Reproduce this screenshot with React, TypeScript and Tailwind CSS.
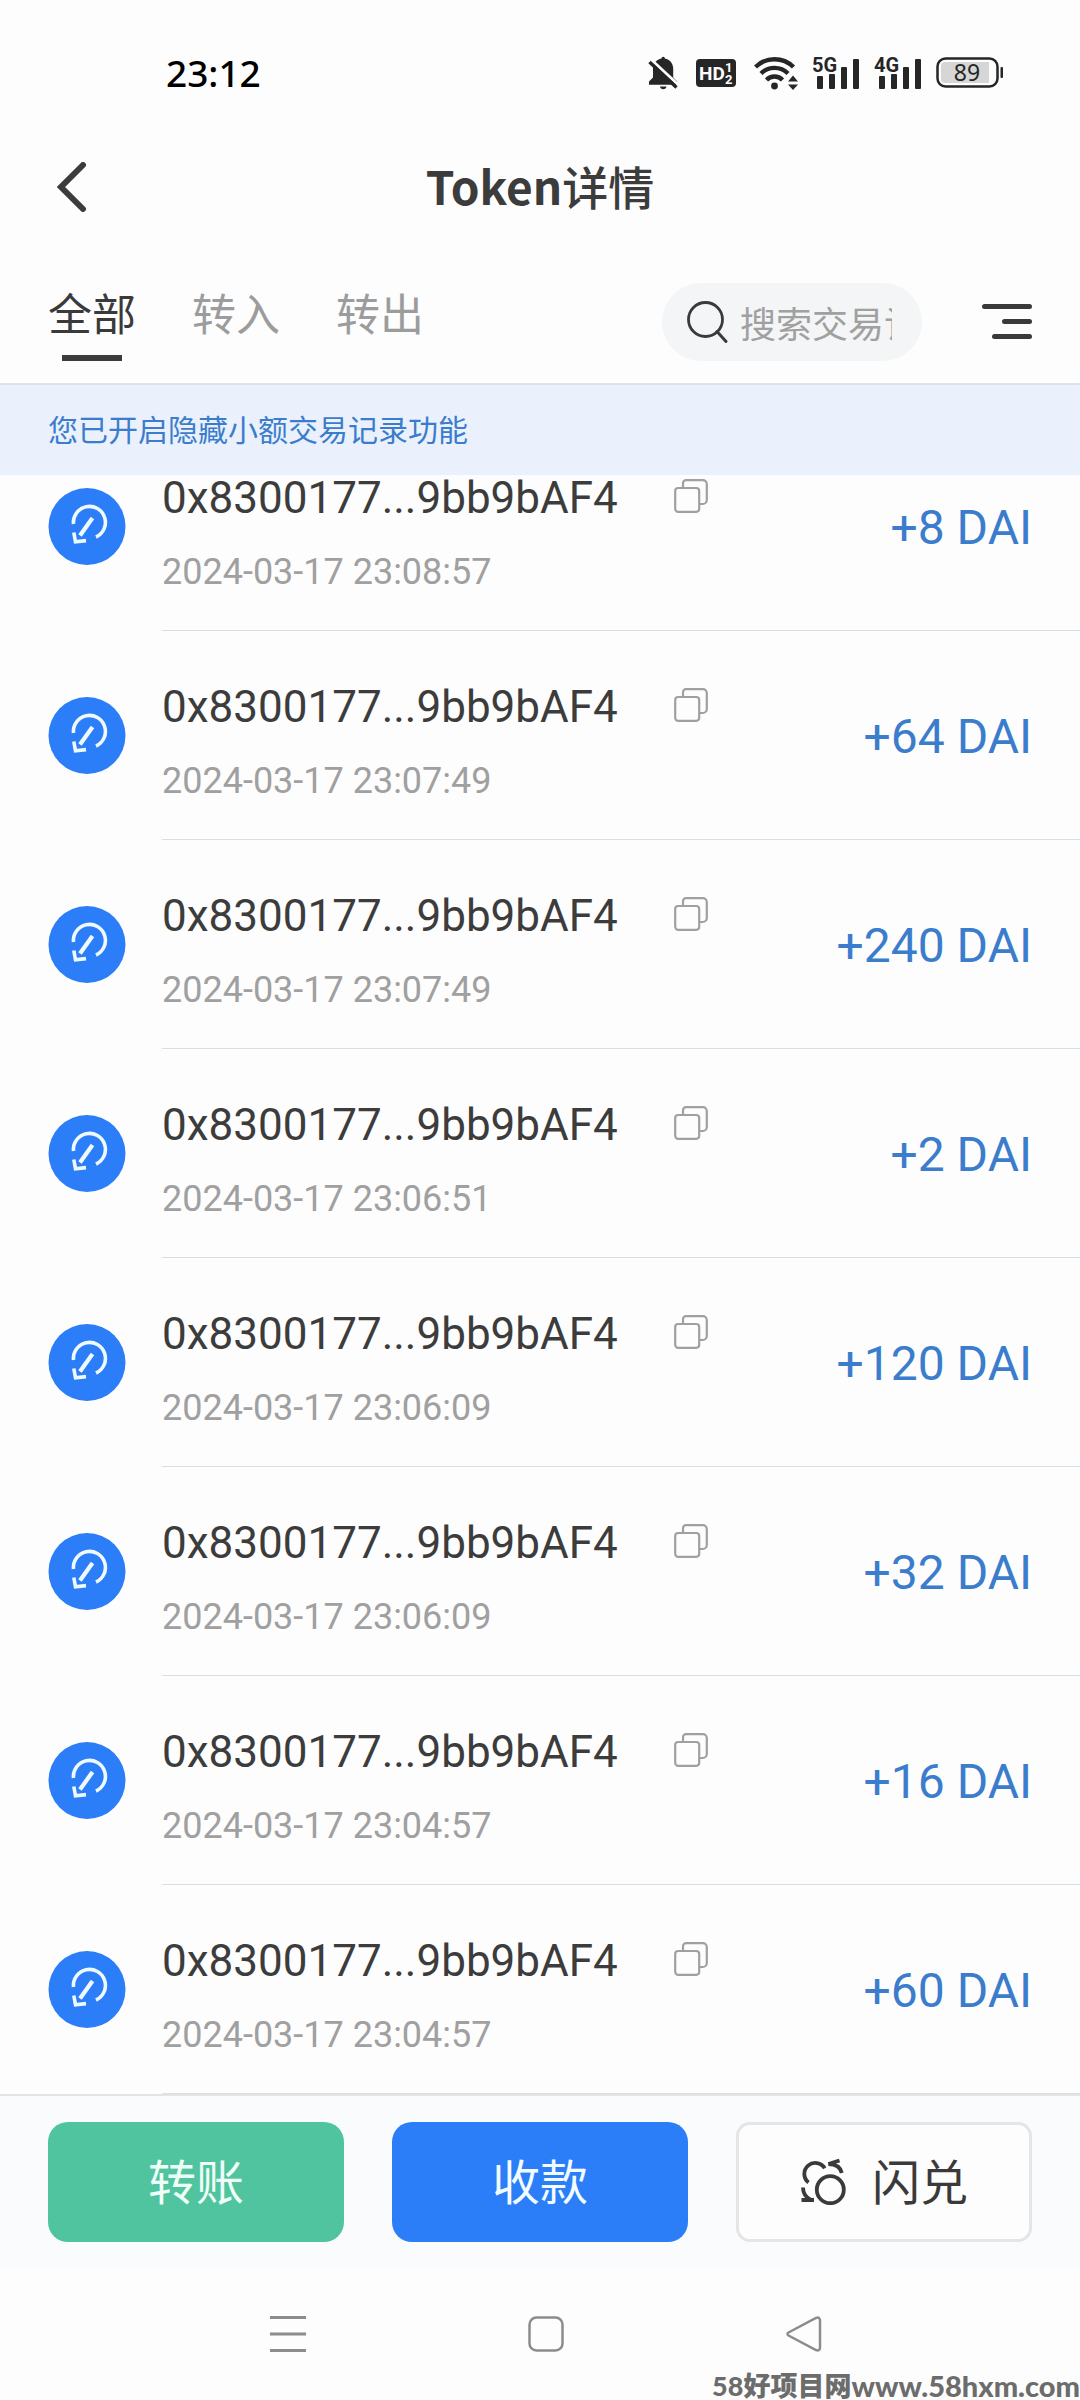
import clsx from 'clsx'
import { useState } from 'react'

type Transaction = {
  address: string
  time: string
  amount: string
}

const tabs = ['全部', '转入', '转出']

const transactions: Transaction[] = [
  { address: '0x8300177...9bb9bAF4', time: '2024-03-17 23:08:57', amount: '+8 DAI' },
  { address: '0x8300177...9bb9bAF4', time: '2024-03-17 23:07:49', amount: '+64 DAI' },
  { address: '0x8300177...9bb9bAF4', time: '2024-03-17 23:07:49', amount: '+240 DAI' },
  { address: '0x8300177...9bb9bAF4', time: '2024-03-17 23:06:51', amount: '+2 DAI' },
  { address: '0x8300177...9bb9bAF4', time: '2024-03-17 23:06:09', amount: '+120 DAI' },
  { address: '0x8300177...9bb9bAF4', time: '2024-03-17 23:06:09', amount: '+32 DAI' },
  { address: '0x8300177...9bb9bAF4', time: '2024-03-17 23:04:57', amount: '+16 DAI' },
  { address: '0x8300177...9bb9bAF4', time: '2024-03-17 23:04:57', amount: '+60 DAI' },
]

function BellOffIcon() {
  return (
    <svg width="30" height="34" viewBox="0 0 30 34" fill="#262626">
      <path d="M13.5 2.5a1.7 1.7 0 0 1 3.4 0c5 1 8.3 5 8.3 10v9l4 4v3.2H1v-3.2l4-4v-9c0-5 3.5-9 8.5-10z" />
      <path d="M12 30.5h6.5a3.3 3.3 0 0 1-6.5 0z" />
      <path d="M3 3.5 30 28.5" stroke="#fdfdfd" strokeWidth="3" />
      <path d="M1.5 6 28.5 31.5" stroke="#262626" strokeWidth="3.4" />
    </svg>
  )
}

function HdIcon() {
  return (
    <svg width="40" height="28" viewBox="0 0 40 28">
      <rect width="40" height="28" rx="4" fill="#262626" />
      <g fill="#fdfdfd" className="font-['Roboto',sans-serif] font-bold">
        <text x="3" y="21" fontSize="19">
          HD
        </text>
        <text x="29" y="13" fontSize="13">
          1
        </text>
        <text x="29" y="25" fontSize="13">
          2
        </text>
      </g>
    </svg>
  )
}

function WifiIcon() {
  return (
    <svg width="44" height="34" viewBox="0 0 44 34" fill="none">
      <g stroke="#262626" strokeWidth="4.4">
        <path d="M1.5 11a27 27 0 0 1 38 0" />
        <path d="M7 17.5a19 19 0 0 1 27 0" />
        <path d="M12.5 24a11 11 0 0 1 16 0" />
      </g>
      <circle cx="20.5" cy="30" r="3.4" fill="#262626" />
      <path d="m39 19.500 5 6H34zM34 28.500h10l-5 5.500z" fill="#262626" />
    </svg>
  )
}

function SignalIcon({ label }: { label: string }) {
  return (
    <svg width="48" height="42" viewBox="0 -4 48 42" fill="#262626">
      <rect x="5" y="20" width="6" height="13" rx="1" />
      <rect x="17" y="18" width="6" height="15" rx="1" />
      <rect x="29" y="11" width="6" height="22" rx="1" />
      <rect x="41" y="3" width="6" height="30" rx="1" />
      <text x="0" y="16" fontSize="20" className="font-['Roboto',sans-serif] font-bold">
        {label}
      </text>
    </svg>
  )
}

function BatteryIcon() {
  return (
    <svg width="68" height="32" viewBox="0 0 68 32" fill="none">
      <rect x="1.5" y="1.5" width="60" height="28" rx="8" stroke="#262626" strokeWidth="2.5" />
      <path d="M9 5h44v21H9a4 4 0 0 1-4-4V9a4 4 0 0 1 4-4z" fill="#d6d6d6" />
      <rect x="64.500" y="10" width="2.500" height="11" rx="1" fill="#262626" />
      <text
        x="31"
        y="24"
        fontSize="23"
        textAnchor="middle"
        fill="#262626"
        className="font-['Noto_Sans',sans-serif]"
      >
        89
      </text>
    </svg>
  )
}

function ReceiveIcon() {
  return (
    <svg width="78" height="78" viewBox="0 0 78 78" fill="none" className="shrink-0">
      <circle cx="39" cy="38.500" r="38.500" fill="#2b7ef8" />
      <g stroke="#effaff" strokeWidth="3.600">
        <path d="M25.500 36A16 16 0 1 1 48 49" />
        <path d="M44.500 30 32 47.500" strokeWidth="4.200" />
        <path d="M25.800 44.500 27.500 53.800 38 52.600" />
      </g>
    </svg>
  )
}

function CopyIcon() {
  return (
    <svg width="34" height="34" viewBox="0 0 34 34" fill="none" stroke="#a0a0a0" strokeWidth="2.200">
      <rect x="1.200" y="9" width="24" height="23.800" rx="3" />
      <path d="M9 9V4.200a3 3 0 0 1 3-3h16.800a4 4 0 0 1 4 4V21a4 4 0 0 1-4 4h-3.600" />
    </svg>
  )
}

function SwapIcon() {
  return (
    <svg width="46" height="46" viewBox="0 0 46 46" fill="none" stroke="#3a3a3a" strokeWidth="3.800">
      <circle cx="30.300" cy="30.700" r="13.500" />
      <path d="M8.500 23.500A11 11 0 1 1 24.800 9.300" />
      <path d="M39.500 1.500 28.500 5C35 5.200 40.500 8 41.800 14" />
      <path d="M3 28.500C3 34 6 38.500 11 41M1.500 41h12.500" />
    </svg>
  )
}

function StatusBar() {
  return (
    <div className="flex h-[146px] items-center justify-between pr-[76px] pl-[166px]">
      <span className="font-['Noto_Sans',sans-serif] text-[37px] font-medium text-black">23:12</span>
      <div className="flex items-center gap-[18px]">
        <BellOffIcon />
        <HdIcon />
        <div className="flex items-center gap-[14px]">
          <WifiIcon />
          <SignalIcon label="5G" />
          <SignalIcon label="4G" />
          <BatteryIcon />
        </div>
      </div>
    </div>
  )
}

function Header() {
  return (
    <header className="grid h-[82px] grid-cols-[1fr_auto_1fr] items-center px-12">
      <button type="button" aria-label="返回" className="justify-self-start px-2">
        <svg width="32" height="50" viewBox="0 0 32 50" fill="none" stroke="#3c3c3c" strokeWidth="6">
          <path d="M27 3 5 25l22 22" strokeLinecap="round" />
        </svg>
      </button>
      <h1 className="pb-1 text-[46px] font-medium">
        <span className="font-bold">Token</span>详情
      </h1>
    </header>
  )
}

function FilterBar() {
  const [active, setActive] = useState<string>('全部')

  return (
    <div className="flex items-start justify-between px-12 pt-[55px] pb-[22px]">
      <nav className="flex gap-14">
        {tabs.map((tab) => (
          <button
            type="button"
            key={tab}
            onClick={() => setActive(tab)}
            className="flex flex-col items-center gap-[14px]"
          >
            <span
              className={clsx('text-[44px] leading-[58px]', {
                'text-[#3a3a3a]': active === tab,
                'text-[#9c9c9c]': active !== tab,
              })}
            >
              {tab}
            </span>
            {active === tab && <span className="h-[6px] w-[60px] bg-[#3c3c3c]" />}
          </button>
        ))}
      </nav>
      <div className="flex items-center gap-[60px]">
        <label className="flex h-[78px] w-[260px] items-center gap-3 rounded-full bg-[#f4f5f6] pr-[30px] pl-6">
          <svg width="42" height="42" viewBox="0 0 42 42" fill="none" stroke="#3a3a3a" className="shrink-0">
            <circle cx="19.500" cy="18.500" r="17" strokeWidth="2.800" />
            <path d="m31 30.500 9 10" strokeWidth="3" strokeLinecap="round" />
          </svg>
          <input
            type="text"
            aria-label="搜索交易记录"
            placeholder="搜索交易记录"
            className="w-full min-w-0 bg-transparent text-[36px] outline-none placeholder:text-[#a0a0a0]"
          />
        </label>
        <button type="button" aria-label="筛选">
          <svg width="50" height="36" viewBox="0 0 50 36" fill="#3a3a3a">
            <rect width="50" height="5" rx="2.500" />
            <rect x="20" y="15" width="30" height="5" rx="2.500" />
            <rect x="10" y="30" width="40" height="5" rx="2.500" />
          </svg>
        </button>
      </div>
    </div>
  )
}

function TransactionRow({ item }: { item: Transaction }) {
  return (
    <li className="flex items-center gap-9 pl-12">
      <ReceiveIcon />
      <div className="flex h-[209px] flex-1 items-center justify-between border-b border-[#dcdddf] pr-12">
        <div className="flex flex-col gap-6 pt-4">
          <div className="flex items-center gap-14">
            <p className="text-[44px] leading-[52px] text-[#3c3c3c]">{item.address}</p>
            <button type="button" aria-label="复制" className="pb-1">
              <CopyIcon />
            </button>
          </div>
          <p className="text-[36px] leading-[48px] text-[#a0a0a0]">{item.time}</p>
        </div>
        <p className="pt-1 text-[48px] text-[#3b7dcc]">{item.amount}</p>
      </div>
    </li>
  )
}

function ActionBar() {
  return (
    <div className="grid grid-cols-3 gap-12 border-t-2 border-[#e1e3e5] bg-[#f9fbfd] px-12 py-[26px] text-[48px]">
      <button type="button" className="h-[120px] rounded-[20px] bg-[#4fc49e] pt-1 text-[#effff8]">
        转账
      </button>
      <button type="button" className="h-[120px] rounded-[20px] bg-[#2b7ef8] pt-1 text-[#f2fbff]">
        收款
      </button>
      <button
        type="button"
        className="flex h-[120px] items-center justify-center gap-[26px] rounded-[14px] border-3 border-[#e3e5e6] bg-[#fdfdfd] text-[#3a3a3a]"
      >
        <SwapIcon />
        <span className="pt-1">闪兑</span>
      </button>
    </div>
  )
}

function SystemNav() {
  return (
    <div className="flex h-[104px] items-end justify-between pr-[258px] pb-5 pl-[270px]">
      <button type="button" aria-label="最近任务">
        <svg width="36" height="36" viewBox="0 0 36 36" stroke="#8c8c8c" strokeWidth="3">
          <path d="M0 1.500h36M0 18h36M0 34.500h36" />
        </svg>
      </button>
      <button type="button" aria-label="主屏幕">
        <svg width="36" height="36" viewBox="0 0 36 36" fill="none" stroke="#8c8c8c" strokeWidth="2.500">
          <rect x="1.500" y="1.500" width="33" height="33" rx="7" />
        </svg>
      </button>
      <button type="button" aria-label="返回上一页">
        <svg width="36" height="36" viewBox="0 0 36 36" fill="none" stroke="#8c8c8c" strokeWidth="2.500">
          <path d="M2.500 16.500 30 2c2.500-1 4 0 4 2.500v27c0 2.500-1.500 3.500-4 2.500L2.500 19.500c-1.300-.8-1.300-2.200 0-3z" />
        </svg>
      </button>
    </div>
  )
}

export default function App() {
  return (
    <div className="flex min-h-screen flex-col bg-[#fdfdfd] font-['Roboto','Noto_Sans_CJK_SC',sans-serif] text-[#3c3c3c]">
      <StatusBar />
      <div className="font-['Noto_Sans_CJK_SC',sans-serif]">
        <Header />
        <FilterBar />
        <p className="flex h-[92px] items-center border-t-2 border-[#dfe1e8] bg-[#eaf1fd] px-12 pb-1 text-[30px] text-[#3b7dcc]">
          您已开启隐藏小额交易记录功能
        </p>
      </div>

      {/* --- List, first row scrolled under the banner --- */}
      <div className="grow overflow-hidden">
        <ul className="-mt-[53px]">
          {transactions.map((item, idx) => (
            <TransactionRow item={item} key={idx} />
          ))}
        </ul>
      </div>

      <ActionBar />
      <SystemNav />
      <p className="flex h-[28px] items-center justify-end overflow-hidden font-['Lato','Noto_Sans_CJK_SC',sans-serif] text-[27px] leading-[28px] font-black whitespace-nowrap text-[#6c6c6c]">
        58好项目网<span className="text-[29px]">www.58hxm.com</span>
      </p>
    </div>
  )
}
